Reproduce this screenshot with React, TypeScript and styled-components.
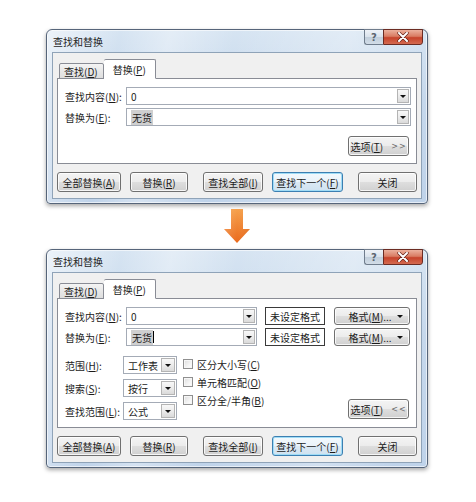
import React from "react";
import styled, { createGlobalStyle, css } from "styled-components";

const GlobalStyle = createGlobalStyle`
  html, body { margin: 0; padding: 0; background: #ffffff; }
  body {
    font-family: "Noto Sans CJK SC", "Noto Sans", sans-serif;
    font-size: 10px;
    color: #1b1b1b;
  }
  * { box-sizing: border-box; }
`;

const Page = styled.div`
  width: 476px;
  height: 502px;
  padding: 29px 0 0 46px;
  display: flex;
  flex-direction: column;
`;

const Window = styled.div<{ $h: number }>`
  width: 382px;
  height: ${(p) => p.$h}px;
  flex: none;
  display: flex;
  flex-direction: column;
  padding: 0 5px 4px 5px;
  border: 1px solid #56657a;
  border-radius: 6px 6px 4px 4px;
  background:
    linear-gradient(100deg, rgba(255,255,255,0.55) 0%, rgba(255,255,255,0) 18%, rgba(255,255,255,0.35) 30%, rgba(255,255,255,0) 46%, rgba(255,255,255,0.3) 74%, rgba(255,255,255,0) 92%),
    linear-gradient(180deg, #d6e4f2 0%, #c6d8ec 40%, #bfd3ea 100%);
  box-shadow: inset 0 0 0 1px rgba(255,255,255,0.6), 0 2px 4px rgba(0,0,0,0.35);
`;

const TitleBar = styled.div`
  height: 22px;
  flex: none;
  display: flex;
  align-items: center;
  padding-left: 1px;
`;

const Title = styled.span`
  flex: 1;
  color: #1e1e1e;
`;

const CaptionGroup = styled.div`
  align-self: flex-start;
  display: flex;
  margin-top: -1px;
  margin-right: -1px;
`;

const CaptionBtn = styled.div<{ $kind: "help" | "close" }>`
  height: 16px;
  display: flex;
  align-items: center;
  justify-content: center;
  ${(p) =>
    p.$kind === "help"
      ? css`
          width: 19px;
          border: 1px solid #6f7c8c;
          border-right: none;
          border-radius: 0 0 0 3px;
          color: #5a6470;
          font-family: "DejaVu Sans", sans-serif;
          font-size: 10px;
          font-weight: bold;
          background: linear-gradient(180deg, #eef2f7 0%, #d9e2ec 50%, #c1cedb 51%, #d2dde8 100%);
        `
      : css`
          width: 40px;
          border: 1px solid #6b2b22;
          border-radius: 0 0 3px 0;
          background: linear-gradient(180deg, #ebb09d 0%, #d97c63 45%, #c6432b 55%, #d46a50 100%);
        `}
`;

const Client = styled.div`
  flex: 1;
  display: flex;
  flex-direction: column;
  border: 1px solid #8fa3b8;
  background: #f0f0f0;
  padding: 6px 4px 6px 4px;
`;

const TabStrip = styled.div`
  display: flex;
  align-items: flex-end;
  height: 20px;
  flex: none;
  padding-left: 2px;
  margin-bottom: -1px;
  position: relative;
  z-index: 1;
`;

const Tab = styled.div<{ $active?: boolean }>`
  display: flex;
  align-items: center;
  white-space: nowrap;
  border: 1px solid #898c95;
  border-radius: 2px 2px 0 0;
  ${(p) =>
    p.$active
      ? css`
          height: 20px;
          padding: 0 9px 0 9px;
          background: #ffffff;
          border-left: none;
          border-bottom-color: #ffffff;
        `
      : css`
          height: 16px;
          padding: 0 5px 0 4px;
          background: linear-gradient(180deg, #f4f4f4 0%, #e8e8e8 50%, #dedede 100%);
        `}
`;

const Panel = styled.div`
  flex: 1;
  display: flex;
  flex-direction: column;
  background: #ffffff;
  border: 1px solid #898c95;
  padding: 8px 5px 7px 7px;
`;

const FieldRow = styled.div`
  display: flex;
  align-items: center;
  height: 18px;
  flex: none;
  & + & {
    margin-top: 3px;
  }
`;

const Label = styled.div<{ $w: number }>`
  width: ${(p) => p.$w}px;
  flex: none;
  white-space: nowrap;
`;

const Combo = styled.div<{ $w?: number }>`
  display: flex;
  height: 18px;
  border: 1px solid #a4abb6;
  background: #ffffff;
  padding: 1px;
  ${(p) => (p.$w ? css`width: ${p.$w}px; flex: none;` : css`flex: 1;`)}
`;

const ComboText = styled.div`
  flex: 1;
  display: flex;
  align-items: center;
  padding-left: 3px;
  white-space: nowrap;
`;

const Selected = styled.span`
  background: #cfcfcf;
  padding: 0 1px;
`;

const Caret = styled.span`
  display: inline-block;
  width: 1px;
  height: 12px;
  background: #000;
`;

const DropBtn = styled.div<{ $w?: number }>`
  width: ${(p) => p.$w ?? 12}px;
  flex: none;
  border: 1px solid #b4b4b4;
  background: linear-gradient(180deg, #f8f8f8 0%, #ececec 50%, #dadada 100%);
  display: flex;
  align-items: center;
  justify-content: center;
`;

const Tri = styled.span`
  width: 0;
  height: 0;
  border-left: 3px solid transparent;
  border-right: 3px solid transparent;
  border-top: 3px solid #111;
`;

const FormatBox = styled.div`
  width: 60px;
  height: 18px;
  flex: none;
  margin-left: 8px;
  border: 1px solid #3a3a3a;
  background: #fff;
  display: flex;
  align-items: center;
  justify-content: center;
`;

const Button = styled.div<{ $w: number; $ml?: number; $h?: number; $default?: boolean }>`
  width: ${(p) => p.$w}px;
  height: ${(p) => p.$h ?? 20}px;
  flex: none;
  margin-left: ${(p) => p.$ml ?? 0}px;
  border: 1px solid #707070;
  border-radius: 3px;
  background: linear-gradient(180deg, #f4f4f4 0%, #ececec 48%, #dedede 52%, #d0d0d0 100%);
  box-shadow: inset 0 0 0 1px rgba(255, 255, 255, 0.8);
  display: flex;
  align-items: center;
  justify-content: center;
  white-space: nowrap;
  color: #1b1b1b;
  ${(p) =>
    p.$default &&
    css`
      border-color: #3c7fb1;
      box-shadow: inset 0 0 0 1px #9fdcf6;
      background: linear-gradient(180deg, #f3f9fd 0%, #eaf3fa 48%, #dbe9f4 52%, #cfe2f0 100%);
    `}
`;

const FormatBtnText = styled.span`
  flex: 1;
  text-align: center;
  padding-left: 8px;
`;

const FormatBtnTri = styled.span`
  margin-right: 6px;
  display: flex;
`;

const Chevrons = styled.span`
  margin-left: 8px;
  color: #6a6a6a;
  font-size: 8px;
  letter-spacing: 1px;
  font-family: "DejaVu Sans", sans-serif;
`;

const OptionsBar = styled.div`
  margin-top: auto;
  display: flex;
  justify-content: flex-end;
  padding-right: 2px;
`;

const OptionsArea = styled.div`
  display: flex;
  margin-top: 10px;
  padding-right: 2px;
`;

const SelectCol = styled.div`
  display: flex;
  flex-direction: column;
  gap: 5px;
`;

const SelectRow = styled.div`
  display: flex;
  align-items: center;
  height: 18px;
`;

const CheckCol = styled.div`
  display: flex;
  flex-direction: column;
  margin-left: 6px;
  margin-top: -1px;
`;

const CheckRow = styled.div`
  display: flex;
  align-items: center;
  height: 18px;
  white-space: nowrap;
`;

const CheckBox = styled.span`
  width: 10px;
  height: 10px;
  margin-right: 4px;
  border: 1px solid #8f8f8f;
  background: linear-gradient(135deg, #dcdcdc 0%, #f4f4f4 60%, #ffffff 100%);
  box-shadow: inset 0 0 0 1px #f6f6f6;
`;

const OptionsBtnWrap = styled.div`
  margin-left: auto;
  align-self: flex-end;
  margin-bottom: 1px;
`;

const ButtonRow = styled.div`
  display: flex;
  height: 20px;
  flex: none;
  margin-top: 8px;
`;

const ArrowWrap = styled.div`
  width: 382px;
  height: 45px;
  flex: none;
  display: flex;
  justify-content: center;
  padding-top: 5px;
`;

const U = styled.u`
  text-decoration: underline;
  text-underline-offset: 1px;
`;

const CloseGlyph = () => (
  <svg width="12" height="10" viewBox="0 0 12 10">
    <path d="M2 1 L10 9 M10 1 L2 9" stroke="#5a1a12" strokeWidth="3.2" strokeLinecap="round" />
    <path d="M2 1 L10 9 M10 1 L2 9" stroke="#ffffff" strokeWidth="2" strokeLinecap="round" />
  </svg>
);

const TitleArea: React.FC = () => (
  <TitleBar>
    <Title>查找和替换</Title>
    <CaptionGroup>
      <CaptionBtn $kind="help">?</CaptionBtn>
      <CaptionBtn $kind="close">
        <CloseGlyph />
      </CaptionBtn>
    </CaptionGroup>
  </TitleBar>
);

const Tabs: React.FC = () => (
  <TabStrip>
    <Tab>
      查找(<U>D</U>)
    </Tab>
    <Tab $active>
      替换(<U>P</U>)
    </Tab>
  </TabStrip>
);

const BottomButtons: React.FC = () => (
  <ButtonRow>
    <Button $w={64}>
      全部替换(<U>A</U>)
    </Button>
    <Button $w={58} $ml={9}>
      替换(<U>R</U>)
    </Button>
    <Button $w={60} $ml={15}>
      查找全部(<U>I</U>)
    </Button>
    <Button $w={71} $ml={9} $default>
      查找下一个(<U>F</U>)
    </Button>
    <Button $w={59} $ml={15}>
      关闭
    </Button>
  </ButtonRow>
);

const OptionsButton: React.FC<{ open?: boolean }> = ({ open }) => (
  <Button $w={61} $h={20}>
    选项(<U>T</U>)<Chevrons>{open ? "<<" : ">>"}</Chevrons>
  </Button>
);

const FormatButton: React.FC = () => (
  <Button $w={76} $ml={9} $h={18}>
    <FormatBtnText>
      格式(<U>M</U>)...
    </FormatBtnText>
    <FormatBtnTri>
      <Tri />
    </FormatBtnTri>
  </Button>
);

const Arrow: React.FC = () => (
  <ArrowWrap>
    <svg width="26" height="35" viewBox="0 0 26 35">
      <defs>
        <linearGradient id="ag" x1="0" y1="0" x2="0" y2="1">
          <stop offset="0" stopColor="#f6a14c" />
          <stop offset="1" stopColor="#ea6a1c" />
        </linearGradient>
        <linearGradient id="ah" x1="0" y1="0" x2="1" y2="0">
          <stop offset="0" stopColor="#ffffff" stopOpacity="0.15" />
          <stop offset="0.5" stopColor="#ffffff" stopOpacity="0" />
          <stop offset="1" stopColor="#000000" stopOpacity="0.05" />
        </linearGradient>
      </defs>
      <polygon points="7,0 19,0 19,20 26,20 13,34 0,20 7,20" fill="url(#ag)" />
      <polygon points="7,0 19,0 19,20 26,20 13,34 0,20 7,20" fill="url(#ah)" />
    </svg>
  </ArrowWrap>
);

const SelectBox: React.FC<{ text: string }> = ({ text }) => (
  <Combo $w={54}>
    <ComboText>{text}</ComboText>
    <DropBtn $w={14}>
      <Tri />
    </DropBtn>
  </Combo>
);

export default function App() {
  return (
    <>
      <GlobalStyle />
      <Page>
        <Window $h={175}>
          <TitleArea />
          <Client>
            <Tabs />
            <Panel>
              <FieldRow>
                <Label $w={61}>
                  查找内容(<U>N</U>):
                </Label>
                <Combo>
                  <ComboText>0</ComboText>
                  <DropBtn>
                    <Tri />
                  </DropBtn>
                </Combo>
              </FieldRow>
              <FieldRow>
                <Label $w={61}>
                  替换为(<U>E</U>):
                </Label>
                <Combo>
                  <ComboText>
                    <Selected>无货</Selected>
                  </ComboText>
                  <DropBtn>
                    <Tri />
                  </DropBtn>
                </Combo>
              </FieldRow>
              <OptionsBar>
                <OptionsButton />
              </OptionsBar>
            </Panel>
            <BottomButtons />
          </Client>
        </Window>

        <Arrow />

        <Window $h={219}>
          <TitleArea />
          <Client>
            <Tabs />
            <Panel>
              <FieldRow>
                <Label $w={61}>
                  查找内容(<U>N</U>):
                </Label>
                <Combo $w={131}>
                  <ComboText>0</ComboText>
                  <DropBtn>
                    <Tri />
                  </DropBtn>
                </Combo>
                <FormatBox>未设定格式</FormatBox>
                <FormatButton />
              </FieldRow>
              <FieldRow>
                <Label $w={61}>
                  替换为(<U>E</U>):
                </Label>
                <Combo $w={131}>
                  <ComboText>
                    <Selected>无货</Selected>
                    <Caret />
                  </ComboText>
                  <DropBtn>
                    <Tri />
                  </DropBtn>
                </Combo>
                <FormatBox>未设定格式</FormatBox>
                <FormatButton />
              </FieldRow>
              <OptionsArea>
                <SelectCol>
                  <SelectRow>
                    <Label $w={58}>
                      范围(<U>H</U>):
                    </Label>
                    <SelectBox text="工作表" />
                  </SelectRow>
                  <SelectRow>
                    <Label $w={58}>
                      搜索(<U>S</U>):
                    </Label>
                    <SelectBox text="按行" />
                  </SelectRow>
                  <SelectRow>
                    <Label $w={58}>
                      查找范围(<U>L</U>):
                    </Label>
                    <SelectBox text="公式" />
                  </SelectRow>
                </SelectCol>
                <CheckCol>
                  <CheckRow>
                    <CheckBox />
                    区分大小写(<U>C</U>)
                  </CheckRow>
                  <CheckRow>
                    <CheckBox />
                    单元格匹配(<U>O</U>)
                  </CheckRow>
                  <CheckRow>
                    <CheckBox />
                    区分全/半角(<U>B</U>)
                  </CheckRow>
                </CheckCol>
                <OptionsBtnWrap>
                  <OptionsButton open />
                </OptionsBtnWrap>
              </OptionsArea>
            </Panel>
            <BottomButtons />
          </Client>
        </Window>
      </Page>
    </>
  );
}
